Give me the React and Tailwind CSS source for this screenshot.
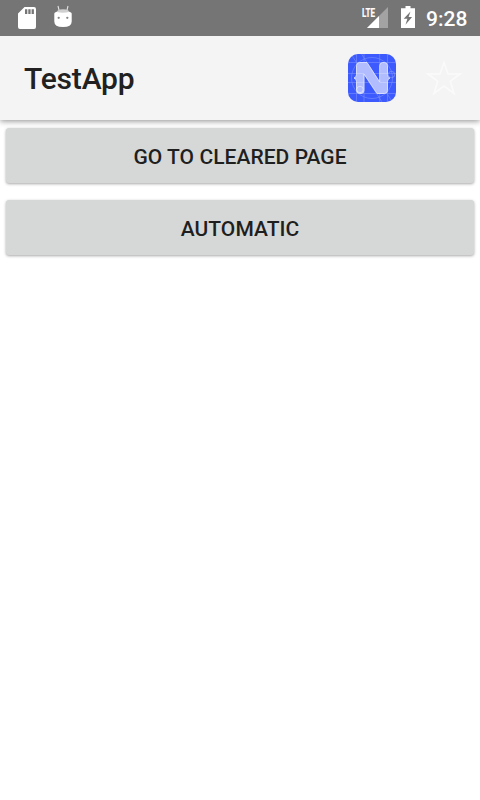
function SdCardIcon() {
  return (
    <svg className="h-9 w-[18px]" viewBox="18 0 18 36">
      <path
        fill="#fff"
        fillRule="evenodd"
        d="M24.500 7H34q2 0 2 2v18q0 2-2 2H20q-2 0-2-2V13.500zM25 9.300v4.700h2.300V9.300zM28.300 9.300v4.700h2.300V9.300zM31.600 9.300v4.700h2.300V9.300z"
      />
    </svg>
  );
}

function AndroidIcon() {
  return (
    <svg className="h-9 w-[18px]" viewBox="54 0 18 36">
      <path d="M58 6l1 4.200M68 6l-1 4.200" stroke="#e4e4e4" strokeWidth="1.100" fill="none" />
      <path d="M56 13Q56.500 9.200 63 9.200T70 13z" fill="#d0d0d0" />
      <path d="M54.300 13.500q.4-1.800 2.500-1.500 6.200 1.400 12.400 0 2.100-.3 2.500 1.500v8q0 5.500-8.700 5.500T54.300 21.500z" fill="#fff" />
      <circle cx="58.700" cy="17.800" r="1.150" fill="#858585" />
      <circle cx="67.300" cy="17.800" r="1.150" fill="#858585" />
    </svg>
  );
}

function SignalIcon() {
  return (
    <svg className="h-9 w-[28px]" viewBox="361 0 28 36">
      <path d="M388 7v21h-21z" fill="#a3a3a3" />
      <path d="M379 16v12h-12z" fill="#fff" />
      <path d="M361 6h14.500v11.500h-14.500z" fill="#757575" />
      <text
        x="362"
        y="16.500"
        textLength="13"
        lengthAdjust="spacingAndGlyphs"
        fill="#fff"
        stroke="#fff"
        strokeWidth="0.200"
        fontFamily="Roboto, sans-serif"
        fontWeight="700"
        fontSize="13.500"
      >
        LTE
      </text>
    </svg>
  );
}

function BatteryIcon() {
  return (
    <svg className="h-9 w-[14px]" viewBox="401 0 14 36">
      <path
        fill="#fff"
        fillRule="evenodd"
        d="M405.500 6h5v2.200h4.500V28h-14V8.200h4.500zM410.500 11.500l-6.800 7.200h3.700l-1.900 6 6.600-7.700h-3.500z"
      />
    </svg>
  );
}

function NativeLogo() {
  return (
    <svg className="size-12" viewBox="0 0 48 48">
      <clipPath id="tile">
        <rect width="48" height="48" rx="10" />
      </clipPath>
      <g clipPath="url(#tile)">
        <rect width="48" height="48" fill="#3c5afd" />
        <path
          d="M8.500 0v48M16 0v48M31.700 0v48M39.500 0v48M0 8.500h48M0 19.500h48M0 28.500h48M0 39.500h48M3 0l31 48M13.500 0l31 48"
          stroke="#7a90fe"
          strokeWidth="0.600"
          fill="none"
        />
        <circle cx="24" cy="24" r="20.500" stroke="#7a90fe" strokeWidth="0.600" fill="none" />
        <path
          d="M11.500 8.500h7.500L31.700 28V11.500q0-3 3-3h1.800q3 0 3 3v9q0 2.500 2.500 3.500-2.500 1-2.500 3.500v9q0 3-3 3h-7.500L16 20v16.500q0 3-3 3h-1.500q-3 0-3-3v-9q0-2.500-2.500-3.500 2.500-1 2.500-3.500v-9q0-3 3-3z"
          fill="#b1bdfe"
          stroke="#e8ecff"
          strokeWidth="0.800"
        />
        <path d="M8.500 19.500h7.500M8.500 28.500h7.500M31.700 19.500h7.800M31.700 28.500h7.800" stroke="#d4dbff" strokeWidth="0.500" />
        <circle cx="12" cy="35.500" r="3.200" stroke="#eef1ff" strokeWidth="0.600" fill="none" />
        <circle cx="43.500" cy="20.500" r="3.200" stroke="#91a2fe" strokeWidth="0.600" fill="none" />
      </g>
    </svg>
  );
}

function StarIcon() {
  return (
    <svg className="size-12" viewBox="420 54 48 48">
      <path
        d="M444 62.500l4 11.500h12l-9.700 7.300 3.700 12.200-10-7.500-10 7.500 3.700-12.200L428 74h12z"
        fill="none"
        stroke="#fafafa"
        strokeWidth="1.700"
      />
    </svg>
  );
}

function AppButton({ children }) {
  return (
    <button className="h-[55px] w-full rounded-[3px] bg-[#d6d8d7] pt-[3px] text-[21px] leading-none font-medium tracking-[0.050px] text-[#1f1f1f] shadow-[0_1px_3px_rgba(0,0,0,0.35)]">
      {children}
    </button>
  );
}

export default function App() {
  return (
    <div className="flex h-[800px] w-[480px] flex-col overflow-hidden bg-white font-[Roboto,sans-serif]">
      <div className="z-10 flex h-9 shrink-0 items-center justify-between bg-[#757575] pr-[12px] pl-[18px]">
        <div className="flex gap-[18px]">
          <SdCardIcon />
          <AndroidIcon />
        </div>
        <div className="flex items-center">
          <SignalIcon />
          <div className="ml-3">
            <BatteryIcon />
          </div>
          <span className="ml-[11px] w-[42px] pt-[2px] text-[21px] leading-none font-medium text-white">9:28</span>
        </div>
      </div>
      <header className="flex h-[84px] shrink-0 items-center bg-[#f4f4f4] pr-3 pl-6 shadow-[0_1px_6px_rgba(0,0,0,0.45)]">
        <h1 className="mt-[2px] text-[30px] leading-none font-medium tracking-[-0.180px] text-[#212121]">TestApp</h1>
        <div className="ml-auto flex gap-6">
          <NativeLogo />
          <StarIcon />
        </div>
      </header>
      <main className="flex flex-col gap-[17px] px-[6px] pt-2">
        <AppButton>GO TO CLEARED PAGE</AppButton>
        <AppButton>AUTOMATIC</AppButton>
      </main>
    </div>
  );
}
